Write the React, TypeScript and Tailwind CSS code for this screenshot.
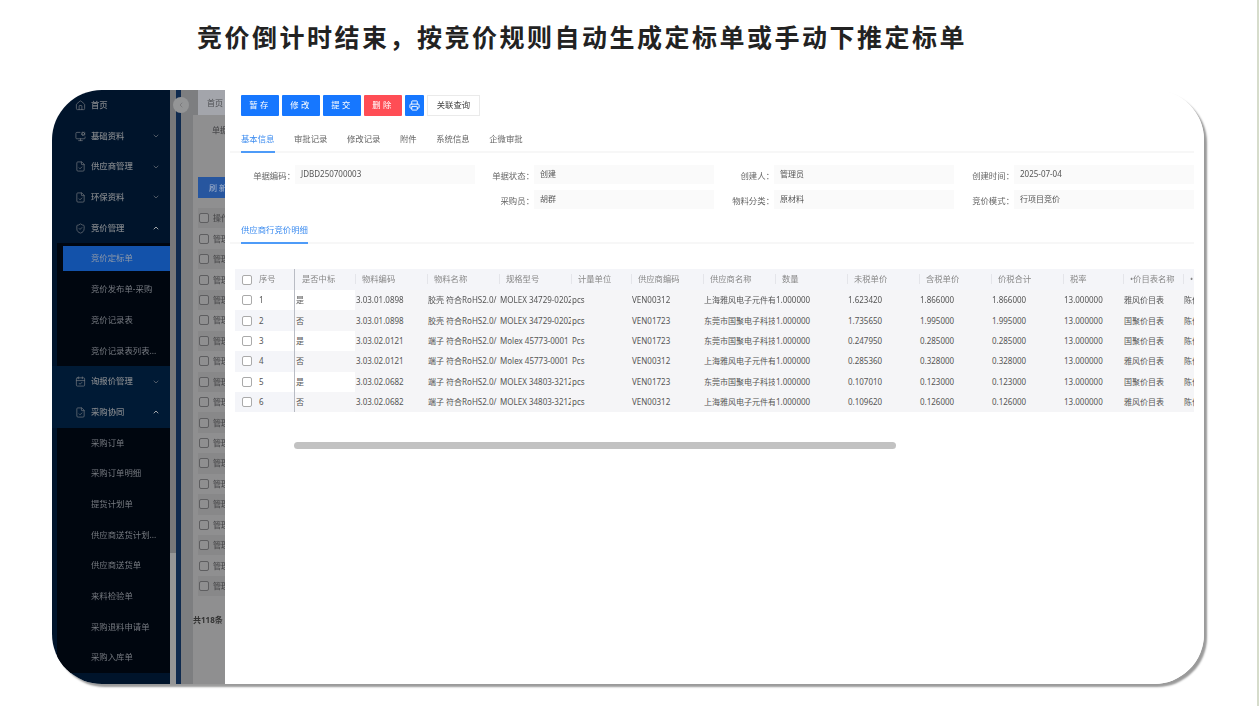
import { CalendarCheck, ChevronDown, ChevronLeft, ChevronUp, FileCheck, House, MonitorCog, Printer, ShieldCheck } from 'lucide-react';

type MenuItem = { label: string; icon?: 'home' | 'monitor' | 'doc' | 'shield' | 'cal'; arrow?: 'down' | 'up'; sub?: boolean; active?: boolean; lit?: boolean };

const menu: MenuItem[] = [
    { label: '首页', icon: 'home' },
    { label: '基础资料', icon: 'monitor', arrow: 'down' },
    { label: '供应商管理', icon: 'doc', arrow: 'down' },
    { label: '环保资料', icon: 'doc', arrow: 'down' },
    { label: '竞价管理', icon: 'shield', arrow: 'up' },
    { label: '竞价定标单', sub: true, active: true },
    { label: '竞价发布单-采购', sub: true },
    { label: '竞价记录表', sub: true },
    { label: '竞价记录表列表...', sub: true },
    { label: '询报价管理', icon: 'cal', arrow: 'down', lit: true },
    { label: '采购协同', icon: 'doc', arrow: 'up', lit: true },
    { label: '采购订单', sub: true },
    { label: '采购订单明细', sub: true },
    { label: '提货计划单', sub: true },
    { label: '供应商送货计划...', sub: true },
    { label: '供应商送货单', sub: true },
    { label: '来料检验单', sub: true },
    { label: '采购退料申请单', sub: true },
    { label: '采购入库单', sub: true },
];

const MenuIcon = ({ name }: { name: MenuItem['icon'] }) => {
    const cls = 'w-[11px] h-[11px] shrink-0';
    if (name === 'home') return <House className={cls} strokeWidth={1.5} />;
    if (name === 'monitor') return <MonitorCog className={cls} strokeWidth={1.5} />;
    if (name === 'doc') return <FileCheck className={cls} strokeWidth={1.5} />;
    if (name === 'shield') return <ShieldCheck className={cls} strokeWidth={1.5} />;
    if (name === 'cal') return <CalendarCheck className={cls} strokeWidth={1.5} />;
    return null;
};

const Sidebar = () => (
    <div className="w-[118px] shrink-0 bg-[#00142b] text-[8.4px] text-[#757a80] overflow-hidden">
        {menu.map((m, i) =>
            m.sub ? (
                <div key={i} className="h-[30.7px] ml-[5px] bg-[#00060f] flex items-center">
                    <div className={`w-full ml-[6px] h-[25px] flex items-center pl-[28px] whitespace-nowrap ${m.active ? 'bg-[#1352aa] text-[#8d98a8]' : ''}`}>
                        {m.label}
                    </div>
                </div>
            ) : (
                <div key={i} className={`h-[30.7px] flex items-center pl-[23px] pr-[10px] ${m.lit ? 'bg-[#001a35]' : ''}`}>
                    <MenuIcon name={m.icon} />
                    <span className="ml-[5px] font-medium text-[#7e8388]">{m.label}</span>
                    {m.arrow === 'down' && <ChevronDown className="w-[8px] h-[8px] ml-auto" />}
                    {m.arrow === 'up' && <ChevronUp className="w-[8px] h-[8px] ml-auto text-[#a0a4a8]" strokeWidth={3} />}
                </div>
            )
        )}
    </div>
);

const ListPane = () => (
    <div className="relative w-[44px] shrink-0 bg-[#7d7e80] overflow-hidden text-[8px] text-[#4c4c4e]">
        <div className="h-[25px] ml-[17px] bg-[#a3a5ab] pl-[9px] flex items-center text-[#4d4e52] whitespace-nowrap">首页</div>
        <div className="ml-[12px] bg-[#8f8f90] h-[569px]">
            <div className="h-[62px] pl-[19px] pt-[9px] whitespace-nowrap font-medium">单据</div>
            <div className="ml-[5px] h-[21px] bg-[#27569f] text-[#a7b5cc] flex items-center pl-[11px] whitespace-nowrap">刷 新</div>
            <div className="h-[10px]" />
            {Array.from({ length: 19 }).map((_, i) => (
                <div key={i} className={`h-[20.44px] ml-[5px] flex items-center pl-[1px] gap-[4px] whitespace-nowrap ${i % 2 === 0 ? 'bg-[#888889]' : ''}`}>
                    <span className="w-[10px] h-[10px] shrink-0 rounded-[2px] border border-[#5e5e60] bg-[#8f8f90]" />
                    <span className="font-medium">{i === 0 ? '操作' : '管理'}</span>
                </div>
            ))}
            <div className="pt-[18px] font-bold text-[8px] text-[#333] whitespace-nowrap">共118条</div>
        </div>
    </div>
);

const Field = ({ label, value, labelW }: { label: string; value: string; labelW: number }) => (
    <div className="flex items-center shrink-0">
        <span className="text-right text-[8.4px] text-[#666] pt-[4px] shrink-0" style={{ width: labelW }}>{label}：</span>
        <span className="w-[180px] h-[19px] bg-[#fafafa] text-[8px] text-[#555] flex items-center pl-[6px] pb-[1px]">{value}</span>
    </div>
);

const headers: [string, number][] = [
    ['是否中标', 60], ['物料编码', 72], ['物料名称', 72], ['规格型号', 72], ['计量单位', 60], ['供应商编码', 72], ['供应商名称', 72],
    ['数量', 72], ['未税单价', 72], ['含税单价', 72], ['价税合计', 72], ['税率', 60], ['•价目表名称', 60], ['•', 20],
];

const rows = [
    ['是', '3.03.01.0898', '胶壳 符合RoHS2.0/', 'MOLEX 34729-0202', 'pcs', 'VEN00312', '上海雅风电子元件有限公司', '1.000000', '1.623420', '1.866000', '1.866000', '13.000000', '雅风价目表', '陈伟'],
    ['否', '3.03.01.0898', '胶壳 符合RoHS2.0/', 'MOLEX 34729-0202', 'pcs', 'VEN01723', '东莞市国聚电子科技有限公司', '1.000000', '1.735650', '1.995000', '1.995000', '13.000000', '国聚价目表', '陈伟'],
    ['是', '3.03.02.0121', '端子 符合RoHS2.0/', 'Molex 45773-0001', 'Pcs', 'VEN01723', '东莞市国聚电子科技有限公司', '1.000000', '0.247950', '0.285000', '0.285000', '13.000000', '国聚价目表', '陈伟'],
    ['否', '3.03.02.0121', '端子 符合RoHS2.0/', 'Molex 45773-0001', 'Pcs', 'VEN00312', '上海雅风电子元件有限公司', '1.000000', '0.285360', '0.328000', '0.328000', '13.000000', '雅风价目表', '陈伟'],
    ['是', '3.03.02.0682', '端子 符合RoHS2.0/', 'MOLEX 34803-3212', 'pcs', 'VEN01723', '东莞市国聚电子科技有限公司', '1.000000', '0.107010', '0.123000', '0.123000', '13.000000', '国聚价目表', '陈伟'],
    ['否', '3.03.02.0682', '端子 符合RoHS2.0/', 'MOLEX 34803-3212', 'pcs', 'VEN00312', '上海雅风电子元件有限公司', '1.000000', '0.109620', '0.126000', '0.126000', '13.000000', '雅风价目表', '陈伟'],
];

const Checkbox = () => <span className="w-[10px] h-[10px] shrink-0 rounded-[2px] border border-[#aaa] bg-white" />;

const DetailTable = () => (
    <div className="ml-[10px] w-[959px] overflow-hidden text-[8px] text-[#555]">
        <div className="flex h-[21px] bg-[#f4f5f9] text-[#888] text-[8.3px] items-center">
            <div className="w-[60px] shrink-0 flex items-center pl-[7px] gap-[7px] h-full border-r border-[#b9bcc4]">
                <Checkbox />
                <span>序号</span>
            </div>
            {headers.map(([h, w], i) => (
                <div key={i} className="relative shrink-0 pl-[7px] h-full flex items-center whitespace-nowrap overflow-hidden" style={{ width: w }}>
                    {i > 0 && <span className="absolute left-0 top-[5px] h-[10px] w-px bg-[#e4e5ea]" />}
                    {h}
                </div>
            ))}
        </div>
        {rows.map((r, i) => (
            <div key={i} className="flex h-[20.4px] items-center">
                <div className={`w-[60px] shrink-0 flex items-center pl-[7px] gap-[7px] h-full border-r border-[#b9bcc4] ${i % 2 ? 'bg-[#f4f5f9]' : 'bg-white'}`}>
                    <Checkbox />
                    <span>{i + 1}</span>
                </div>
                <div className={`w-[60px] shrink-0 pl-[1px] h-full flex items-center ${i % 2 ? 'bg-[#f6f6f8]' : 'bg-white'}`}>{r[0]}</div>
                {r.slice(1).map((c, j) => (
                    <div key={j} className="shrink-0 pl-[1px] h-full flex items-center whitespace-nowrap overflow-hidden bg-[#f5f5f7]" style={{ width: headers[j + 1][1] }}>
                        {c}
                    </div>
                ))}
            </div>
        ))}
        <div className="h-[30px]" />
        <div className="ml-[59px] w-[602px] h-[7px] rounded-full bg-[#c2c2c2]" />
    </div>
);

const Tabs = ({ items }: { items: string[] }) => (
    <div className="ml-[5px] mr-[10px] flex gap-[19.5px] border-b-2 border-[#f7f7f7] pl-[11px] text-[8.4px] text-[#666]">
        {items.map((t, i) => (
            <div key={t} className={`h-[23px] pt-[3px] -mb-[2px] ${i === 0 ? 'text-[#3c8cf0] border-b-2 border-[#4e9bf8]' : ''}`}>{t}</div>
        ))}
    </div>
);

const Btn = ({ label, danger }: { label: string; danger?: boolean }) => (
    <div className={`h-[21px] w-[38px] flex items-center justify-center rounded-[1px] text-white text-[8.4px] tracking-[2.5px] ${danger ? 'bg-[#ff4d55]' : 'bg-[#1677ff]'}`}>{label}</div>
);

const Detail = () => (
    <div className="flex-1 min-w-0 bg-white pt-[5px] overflow-hidden">
        <div className="flex gap-[3px] pl-[16px] h-[21px]">
            <Btn label="暂存" />
            <Btn label="修改" />
            <Btn label="提交" />
            <Btn label="删除" danger />
            <div className="w-[19px] h-[21px] bg-[#1677ff] rounded-[1px] flex items-center justify-center">
                <Printer className="w-[11px] h-[11px] text-white" />
            </div>
            <div className="w-[53px] h-[21px] border border-[#eaeaea] text-[8.4px] text-[#444] flex items-center justify-center">关联查询</div>
        </div>
        <div className="h-[14px]" />
        <Tabs items={['基本信息', '审批记录', '修改记录', '附件', '系统信息', '企微审批']} />
        <div className="flex mt-[12px] h-[19px]">
            <Field label="单据编码" value="JDBD250700003" labelW={70} />
            <Field label="单据状态" value="创建" labelW={59} />
            <Field label="创建人" value="管理员" labelW={60} />
            <Field label="创建时间" value="2025-07-04" labelW={60} />
        </div>
        <div className="flex mt-[6px] h-[19px] pl-[250px]">
            <Field label="采购员" value="胡群" labelW={59} />
            <Field label="物料分类" value="原材料" labelW={60} />
            <Field label="竞价模式" value="行项目竞价" labelW={60} />
        </div>
        <div className="h-[12px]" />
        <Tabs items={['供应商行竞价明细']} />
        <div className="h-[25px]" />
        <DetailTable />
    </div>
);

export default function App() {
    return (
        <div className="relative w-[1259px] h-[706px] bg-white overflow-hidden font-['Noto_Sans','Noto_Sans_CJK_SC',sans-serif]">
            <div className="h-[90px] pt-[18px] pl-[197px] text-[25px] leading-[36px] font-bold tracking-[2.5px] text-[#222] whitespace-nowrap font-['Noto_Sans_CJK_SC',sans-serif]">
                竞价倒计时结束，按竞价规则自动生成定标单或手动下推定标单
            </div>
            <div className="ml-[52px] w-[1152px] h-[594px] rounded-[50px] shadow-[3px_3px_2px_#9a9a9a]">
                <div className="relative flex h-full rounded-[50px] overflow-hidden blur-[0.3px]">
                    <Sidebar />
                    <div className="w-[6px] shrink-0 flex flex-col">
                        <div className="h-[463px] bg-[#77787a]" />
                        <div className="flex-1 bg-[#959697]" />
                    </div>
                    <div className="w-[5px] shrink-0 bg-[#0f2a4e]" />
                    <ListPane />
                    <Detail />
                    <div className="absolute left-[121px] top-[7px] w-[16px] h-[16px] rounded-full bg-[#949596] flex items-center justify-center text-[#6f7072]">
                        <ChevronLeft className="w-[8px] h-[8px]" />
                    </div>
                </div>
            </div>
            <div className="absolute right-0 top-0 w-[2px] h-full bg-[#d6dccb]" />
        </div>
    );
}
